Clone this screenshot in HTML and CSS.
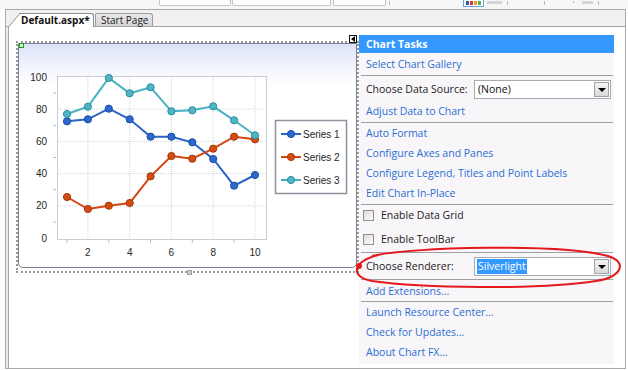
FILE: index.html
```html
<!DOCTYPE html>
<html>
<head>
<meta charset="utf-8">
<link rel="stylesheet" href="styles.css">
</head>
<body>
<div class="toolbar">
  <span class="tb-box b1"></span>
  <span class="tb-box b2"></span>
  <span class="tb-box b3"></span>
  <span class="tick t1"></span>
  <span class="tb-icon"><i class="sq c1"></i><i class="sq c2"></i><i class="sq c3"></i><i class="sq c4"></i></span>
  <span class="tb-text"></span>
  <span class="tick t2"></span>
  <span class="tick t3"></span>
  <span class="tick t4"></span>
  <span class="tb-text small"></span>
  <span class="tick t5"></span>
</div>
<div class="window">
  <div class="tabstrip">
    <div class="tab active">Default.aspx*</div>
    <div class="tab">Start Page</div>
  </div>
  <div class="editor">
    <div class="chart-sel">
      <span class="glyph"></span>
      <span class="smart-tag"></span>
      <span class="handle"></span>
      <span class="red-dot"></span>
      <div class="frame">
        <svg class="chart" width="337" height="223" viewBox="19 44 337 223">
          <rect x="57.5" y="76.5" width="209" height="163" fill="#fff" stroke="#c9cdd6"/>
          <g stroke="#d2d6de" stroke-dasharray="1 1" stroke-width="1">
            <line x1="58" x2="266" y1="205.8" y2="205.8"/>
            <line x1="58" x2="266" y1="173.6" y2="173.6"/>
            <line x1="58" x2="266" y1="141.4" y2="141.4"/>
            <line x1="58" x2="266" y1="109.2" y2="109.2"/>
            <line y1="77" y2="239" x1="87.9" x2="87.9"/>
            <line y1="77" y2="239" x1="129.7" x2="129.7"/>
            <line y1="77" y2="239" x1="171.4" x2="171.4"/>
            <line y1="77" y2="239" x1="213.2" x2="213.2"/>
            <line y1="77" y2="239" x1="255" x2="255"/>
          </g>
          <g stroke="#b8bcc4" stroke-width="1">
            <line x1="53" x2="56" y1="222" y2="222"/>
            <line x1="53" x2="56" y1="189.7" y2="189.7"/>
            <line x1="53" x2="56" y1="157.5" y2="157.5"/>
            <line x1="53" x2="56" y1="125.3" y2="125.3"/>
            <line x1="53" x2="56" y1="93.1" y2="93.1"/>
            <line y1="240" y2="243" x1="67" x2="67"/>
            <line y1="240" y2="243" x1="108.8" x2="108.8"/>
            <line y1="240" y2="243" x1="150.6" x2="150.6"/>
            <line y1="240" y2="243" x1="192.3" x2="192.3"/>
            <line y1="240" y2="243" x1="234.1" x2="234.1"/>
          </g>
          <g class="axis-text" text-anchor="end">
            <text x="47" y="80.6">100</text>
            <text x="47" y="112.8">80</text>
            <text x="47" y="145">60</text>
            <text x="47" y="177.2">40</text>
            <text x="47" y="209.4">20</text>
            <text x="47" y="241.6">0</text>
          </g>
          <g class="axis-text" text-anchor="middle">
            <text x="87.9" y="255.6">2</text>
            <text x="129.7" y="255.6">4</text>
            <text x="171.4" y="255.6">6</text>
            <text x="213.2" y="255.6">8</text>
            <text x="255" y="255.6">10</text>
          </g>
          <polyline fill="none" stroke="#2a64c8" stroke-width="2" points="67,121.3 87.9,119.3 108.8,108.7 129.7,119.3 150.6,136.7 171.4,136.7 192.3,142.3 213.2,159 234.1,185.7 255,175"/>
          <polyline fill="none" stroke="#d2460f" stroke-width="2" points="67,197 87.9,209 108.8,205.7 129.7,203 150.6,176.3 171.4,156 192.3,158.7 213.2,148.7 234.1,136.7 255,139.3"/>
          <polyline fill="none" stroke="#45b3c4" stroke-width="2" points="67,114 87.9,106.7 108.8,78 129.7,93.3 150.6,87.3 171.4,111.3 192.3,110.3 213.2,106.3 234.1,120.3 255,135.3"/>
          <g fill="#2d68cc" stroke="#1b4ea6" stroke-width="1">
            <circle cx="67" cy="121.3" r="3.6"/><circle cx="87.9" cy="119.3" r="3.6"/><circle cx="108.8" cy="108.7" r="3.6"/><circle cx="129.7" cy="119.3" r="3.6"/><circle cx="150.6" cy="136.7" r="3.6"/><circle cx="171.4" cy="136.7" r="3.6"/><circle cx="192.3" cy="142.3" r="3.6"/><circle cx="213.2" cy="159" r="3.6"/><circle cx="234.1" cy="185.7" r="3.6"/><circle cx="255" cy="175" r="3.6"/>
          </g>
          <g fill="#d44c14" stroke="#a8360a" stroke-width="1">
            <circle cx="67" cy="197" r="3.6"/><circle cx="87.9" cy="209" r="3.6"/><circle cx="108.8" cy="205.7" r="3.6"/><circle cx="129.7" cy="203" r="3.6"/><circle cx="150.6" cy="176.3" r="3.6"/><circle cx="171.4" cy="156" r="3.6"/><circle cx="192.3" cy="158.7" r="3.6"/><circle cx="213.2" cy="148.7" r="3.6"/><circle cx="234.1" cy="136.7" r="3.6"/><circle cx="255" cy="139.3" r="3.6"/>
          </g>
          <g fill="#4fb5c5" stroke="#2e8e9e" stroke-width="1">
            <circle cx="67" cy="114" r="3.6"/><circle cx="87.9" cy="106.7" r="3.6"/><circle cx="108.8" cy="78" r="3.6"/><circle cx="129.7" cy="93.3" r="3.6"/><circle cx="150.6" cy="87.3" r="3.6"/><circle cx="171.4" cy="111.3" r="3.6"/><circle cx="192.3" cy="110.3" r="3.6"/><circle cx="213.2" cy="106.3" r="3.6"/><circle cx="234.1" cy="120.3" r="3.6"/><circle cx="255" cy="135.3" r="3.6"/>
          </g>
          <rect x="275.5" y="120.5" width="71" height="73" fill="#fff" stroke="#8c939d" stroke-width="1.5"/>
          <line x1="281" x2="301" y1="134" y2="134" stroke="#2a64c8" stroke-width="2"/>
          <circle cx="291" cy="134" r="3.6" fill="#2d68cc" stroke="#1b4ea6"/>
          <line x1="281" x2="301" y1="157" y2="157" stroke="#d2460f" stroke-width="2"/>
          <circle cx="291" cy="157" r="3.6" fill="#d44c14" stroke="#a8360a"/>
          <line x1="281" x2="301" y1="180" y2="180" stroke="#45b3c4" stroke-width="2"/>
          <circle cx="291" cy="180" r="3.6" fill="#4fb5c5" stroke="#2e8e9e"/>
          <g class="axis-text">
            <text x="303" y="137.6">Series 1</text>
            <text x="303" y="160.6">Series 2</text>
            <text x="303" y="183.6">Series 3</text>
          </g>
        </svg>
      </div>
    </div>
    <div class="panel">
      <div class="hdr">Chart Tasks</div>
      <div class="sec s1">
        <div class="row link">Select Chart Gallery</div>
      </div>
      <div class="sec s2">
        <div class="row"><span class="label">Choose Data Source:</span><span class="combo"><span class="val">(None)</span><span class="btn"></span></span></div>
        <div class="row link gap2">Adjust Data to Chart</div>
      </div>
      <div class="sec s3">
        <div class="row link">Auto Format</div>
        <div class="row link">Configure Axes and Panes</div>
        <div class="row link">Configure Legend, Titles and Point Labels</div>
        <div class="row link">Edit Chart In-Place</div>
      </div>
      <div class="sec s4">
        <div class="row check"><span class="box"></span>Enable Data Grid</div>
        <div class="row check gap4"><span class="box"></span>Enable ToolBar</div>
      </div>
      <div class="sec s5">
        <div class="row"><span class="label">Choose Renderer:</span><span class="combo"><span class="val sel">Silverlight</span><span class="btn"></span></span></div>
      </div>
      <div class="sec s6">
        <div class="row link">Add Extensions...</div>
      </div>
      <div class="sec s7">
        <div class="row link">Launch Resource Center...</div>
        <div class="row link">Check for Updates...</div>
        <div class="row link">About Chart FX...</div>
      </div>
    </div>
  </div>
</div>
<svg class="callout" width="628" height="370" viewBox="0 0 628 370">
  <path d="M372 256 C 410 247, 560 243, 608 256 C 628 262, 622 277, 596 281 C 540 290, 420 288, 372 281 C 350 277, 352 262, 378 255" fill="none" stroke="#e3191b" stroke-width="2"/>
</svg>
</body>
</html>
```

FILE: styles.css
```css
* { box-sizing: border-box; }

body {
  margin: 0;
  width: 628px;
  height: 370px;
  overflow: hidden;
  position: relative;
  background: #ffffff;
  font-family: "Open Sans", "Noto Sans", sans-serif;
  font-size: 10.5px;
  color: #1b1b1b;
}

/* top toolbar fragment */
.toolbar {
  height: 9px;
  display: flex;
  align-items: flex-start;
  background: #f7f6f7;
}
.tb-box {
  height: 6px;
  border: 1px solid #c4c4c4;
  border-top: none;
  border-radius: 0 0 2px 2px;
  background: #fdfdfd;
}
.b1 { margin-left: 159px; width: 72px; }
.b2 { margin-left: 1px; width: 99px; }
.b3 { margin-left: 2px; width: 53px; }
.tick { width: 1px; height: 4px; background: #b8b8b8; margin-top: 1px; }
.t1 { margin-left: 3px; }
.tb-icon {
  margin-left: 73px;
  width: 21px;
  height: 7px;
  border: 1px solid #6f9fdc;
  border-top: none;
  display: flex;
  gap: 1px;
  padding: 1px 2px 0;
  background: #fff;
}
.sq { display: block; width: 3px; height: 4px; }
.c1 { background: #2a5fc0; }
.c2 { background: #e03a2a; }
.c3 { background: #e8a040; }
.c4 { background: #50b050; }
.tb-text { margin-left: 3px; width: 15px; height: 3px; margin-top: 1px; background: #d4d4d4; }
.tb-text.small { margin-left: 8px; width: 11px; }
.t2 { margin-left: 5px; }
.t3 { margin-left: 36px; }
.t4 { margin-left: 28px; height: 2px; }
.t5 { margin-left: 5px; }

/* window */
.window {
  margin-left: 5px;
  width: 621px;
  height: 360px;
  border: 1px solid #a9a9a9;
  background: #ececec;
  display: flex;
  flex-direction: column;
}
.tabstrip {
  height: 17px;
  flex: none;
  display: flex;
  align-items: flex-end;
  background: #f3f0f3;
  border-bottom: 1px solid #a4a4a4;
}
.tab {
  height: 13px;
  line-height: 12px;
  font-size: 10px;
  white-space: nowrap;
}
.tab.active {
  position: relative;
  z-index: 0;
  margin-left: 14px;
  width: 74px;
  height: 14px;
  margin-bottom: -1px;
  padding-left: 1px;
  font-weight: 700;
  color: #111;
  background: #ffffff;
  border-top: 1px solid #8e8e8e;
  border-right: 1px solid #8e8e8e;
  border-radius: 0 3px 0 0;
}
.tab.active::before {
  content: "";
  position: absolute;
  z-index: -1;
  left: -12px;
  top: -1px;
  bottom: 0;
  width: 16px;
  background: #ffffff;
  border-left: 1px solid #8e8e8e;
  border-top: 1px solid #8e8e8e;
  transform: skewX(-40deg);
  transform-origin: bottom left;
}
.tab:not(.active) {
  margin-left: 1px;
  width: 58px;
  padding-left: 5px;
  color: #222;
  background: linear-gradient(#ebe8eb, #d6d3d6);
  border: 1px solid #9c9c9c;
  border-bottom: none;
  border-radius: 2px 3px 0 0;
}

.editor {
  flex: 1;
  margin-left: 2px;
  border-left: 1px solid #a6a6a6;
  background: #ffffff;
  display: flex;
  align-items: flex-start;
  padding: 8px 0 0 7px;
}

/* chart control */
.chart-sel {
  position: relative;
  margin-top: 6px;
  width: 343px;
  height: 232px;
  border: 2px dotted #9a9a9a;
  flex: none;
}
.frame {
  width: 339px;
  height: 225px;
  border: 1px solid #788191;
  border-radius: 0 0 5px 5px;
  background: linear-gradient(#dce3f8 0, #eef1fb 18px, #ffffff 42px);
}
.chart { display: block; }
.axis-text text {
  font-family: "Liberation Sans", Arial, sans-serif;
  font-size: 10px;
  fill: #262626;
}
.glyph {
  position: absolute;
  left: 1px;
  top: 0;
  width: 5px;
  height: 5px;
  border: 1px solid #1d9b1d;
  background: #c8f5c0;
}
.smart-tag {
  position: absolute;
  left: 331px;
  top: -8px;
  width: 8px;
  height: 8px;
  border: 1px solid #111;
  background: #fff;
}
.smart-tag::after {
  content: "";
  position: absolute;
  left: 1px;
  top: 0;
  border-right: 4px solid #000;
  border-top: 3px solid transparent;
  border-bottom: 3px solid transparent;
}
.handle {
  position: absolute;
  left: 169px;
  top: 227px;
  width: 5px;
  height: 5px;
  background: #cacaca;
  border: 1px solid #a0a0a0;
}
.red-dot {
  position: absolute;
  left: 338px;
  top: 220px;
  width: 6px;
  height: 6px;
  border-radius: 50%;
  background: #e81c1c;
}

/* Chart Tasks panel */
.panel {
  width: 255px;
  height: 329px;
  flex: none;
  background: #f9f6f9;
  display: flex;
  flex-direction: column;
}
.hdr {
  height: 18px;
  line-height: 18px;
  padding-left: 7px;
  background: #3399ff;
  color: #ffffff;
  font-weight: 700;
}
.sec {
  margin: 0 1px 0 2px;
  border-bottom: 1px solid #a0a0a0;
}
.s1 { padding: 1px 0; }
.s2 { padding: 3px 0 1px; }
.s3 { padding: 0 0 1px; }
.s4 { padding: 0 0 3px; }
.s5 { padding: 3px 0 3px; }
.s6 { padding: 1px 0 0; }
.s7 { border-bottom: none; }
.row {
  height: 20px;
  display: flex;
  align-items: center;
  padding-left: 5px;
  white-space: nowrap;
}
.gap2 { margin-top: 2px; }
.gap4 { margin-top: 4px; }
.link { color: #2a6ed2; }
.label { width: 108px; flex: none; color: #1b1b1b; }
.combo {
  width: 137px;
  height: 19px;
  display: flex;
  align-items: center;
  justify-content: space-between;
  border: 1px solid #a7abb2;
  background: #ffffff;
  padding: 1px 1px 1px 2px;
}
.val { line-height: 15px; padding: 0 1px; color: #111; }
.val.sel { background: #3399ff; color: #ffffff; }
.btn {
  position: relative;
  width: 15px;
  height: 15px;
  border: 1px solid #9ea3aa;
  background: linear-gradient(#f4f4f4, #d9d9d9);
}
.btn::after {
  content: "";
  position: absolute;
  left: 3px;
  top: 5px;
  border-top: 4px solid #000;
  border-left: 4px solid transparent;
  border-right: 4px solid transparent;
}
.check { padding-left: 2px; }
.box {
  width: 11px;
  height: 11px;
  margin-right: 7px;
  border: 1px solid #8e8f8f;
  background: linear-gradient(135deg, #dcdcdc, #fbfbfb);
}

.callout {
  position: absolute;
  left: 0;
  top: 0;
  pointer-events: none;
}
```
